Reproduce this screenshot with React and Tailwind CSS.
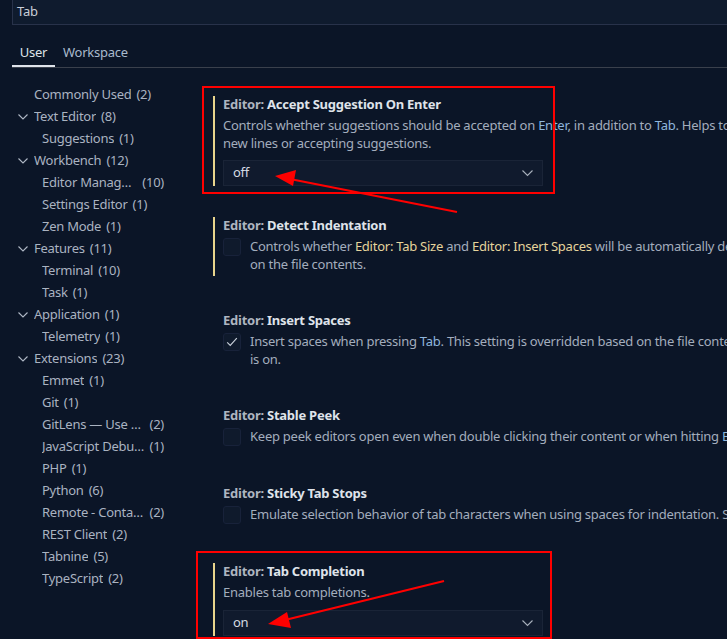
import React from "react";

const Chevron = () => (
  <svg width="10" height="6" viewBox="0 0 10 6" className="shrink-0">
    <polyline points="0.5,0.5 5,5 9.5,0.5" fill="none" stroke="#b0b8c6" strokeWidth="1.1" />
  </svg>
);

const tree = [
  { l: "Commonly Used", c: "(2)", lvl: 0 },
  { l: "Text Editor", c: "(8)", lvl: 0, chev: true },
  { l: "Suggestions", c: "(1)", lvl: 1 },
  { l: "Workbench", c: "(12)", lvl: 0, chev: true },
  { l: "Editor Management", c: "(10)", lvl: 1 },
  { l: "Settings Editor", c: "(1)", lvl: 1 },
  { l: "Zen Mode", c: "(1)", lvl: 1 },
  { l: "Features", c: "(11)", lvl: 0, chev: true },
  { l: "Terminal", c: "(10)", lvl: 1 },
  { l: "Task", c: "(1)", lvl: 1 },
  { l: "Application", c: "(1)", lvl: 0, chev: true },
  { l: "Telemetry", c: "(1)", lvl: 1 },
  { l: "Extensions", c: "(23)", lvl: 0, chev: true },
  { l: "Emmet", c: "(1)", lvl: 1 },
  { l: "Git", c: "(1)", lvl: 1 },
  { l: "GitLens — Use Git Superpowers", c: "(2)", lvl: 1 },
  { l: "JavaScript Debugger", c: "(1)", lvl: 1 },
  { l: "PHP", c: "(1)", lvl: 1 },
  { l: "Python", c: "(6)", lvl: 1 },
  { l: "Remote - Containers", c: "(2)", lvl: 1 },
  { l: "REST Client", c: "(2)", lvl: 1 },
  { l: "Tabnine", c: "(5)", lvl: 1 },
  { l: "TypeScript", c: "(2)", lvl: 1 },
];

const Code = ({ children }) => <span className="text-[#8fb6dd]">{children}</span>;
const Link = ({ children }) => <span className="text-[#e6d49c]">{children}</span>;

const Title = ({ name }) => (
  <div className="h-[16px] leading-[16px] font-bold text-[13px] whitespace-nowrap">
    <span className="text-[#aeb5c0]">Editor: </span>
    <span className="text-[#dfe3ea]">{name}</span>
  </div>
);

const Checkbox = ({ checked }) => (
  <div className="w-[18px] h-[18px] mt-[1px] shrink-0 rounded-[3px] bg-[#0f1a2c] border border-[#18223a] flex items-center justify-center">
    {checked && (
      <svg width="14" height="14" viewBox="0 0 16 16">
        <polyline points="2.5,8.5 6,12 13.5,3.5" fill="none" stroke="#c9d0da" strokeWidth="1.3" />
      </svg>
    )}
  </div>
);

const Dropdown = ({ value, mt }) => (
  <div className={`${mt} w-[320px] h-[26px] bg-[#101a2d] border border-[#1a2437] flex items-center justify-between pl-[9px] pr-[9px] text-[13px] text-[#d5dae2]`}>
    <span>{value}</span>
    <svg width="11" height="7" viewBox="0 0 11 7">
      <polyline points="0.5,0.5 5.5,5.5 10.5,0.5" fill="none" stroke="#a8b0bc" strokeWidth="1.1" />
    </svg>
  </div>
);

export default function App() {
  return (
    <div
      className="relative w-[727px] h-[639px] overflow-hidden bg-[#0b1527] text-[13px] tracking-[-0.25px]"
      style={{ fontFamily: '"Noto Sans", "Open Sans", sans-serif' }}
    >
      {/* search */}
      <div className="ml-[12px] h-[25px] bg-[#0f1b2e] border-l border-b border-[#28324a] flex items-center pl-[4px] text-[#c8ced8] text-[13px]">
        Tab
      </div>

      {/* tabs */}
      <div className="ml-[12px] mt-[17px] h-[26px] border-b border-[#3a404c] flex items-start text-[13px]">
        <div className="h-[25px] w-[43px] border-b-2 border-[#dfe3ea] flex justify-center pt-[1px] text-[#dfe3ea] leading-[18px]">
          User
        </div>
        <div className="ml-[8px] pt-[1px] leading-[18px] text-[#a9bacd]">Workspace</div>
      </div>

      <div className="flex">
        {/* sidebar */}
        <div className="w-[200px] shrink-0 pt-[16px]">
          {tree.map((t, i) => (
            <div key={i} className="h-[22px] flex items-center text-[#aab3c1] whitespace-nowrap">
              <div className="w-[34px] shrink-0 flex justify-end pr-[6px]">{t.chev && <Chevron />}</div>
              <div className={t.lvl ? "flex min-w-0 ml-[8px] max-w-[122px]" : "flex min-w-0 max-w-[130px]"}>
                <span className="truncate min-w-0">{t.l}</span>
                <span className="shrink-0 ml-[5px]">{t.c}</span>
              </div>
            </div>
          ))}
        </div>

        {/* content */}
        <div className="flex-1 min-w-0 pt-[28px] text-[13px] whitespace-nowrap">
          {/* 1 */}
          <div className="ml-[13px] border-l-2 border-[#e8d48c] pl-[8px]">
            <Title name="Accept Suggestion On Enter" />
            <div className="mt-[4px] leading-[18px] text-[#a3adbd]">
              Controls whether suggestions should be accepted on <Code>Enter</Code>, in addition to <Code>Tab</Code>. Helps to avoid ambiguity between inserting
              <br />
              new lines or accepting suggestions.
            </div>
            <Dropdown value="off" mt="mt-[8px]" />
          </div>

          {/* 2 */}
          <div className="mt-[31px] ml-[13px] border-l-2 border-[#e8d48c] pl-[8px] pb-[3px]">
            <Title name="Detect Indentation" />
            <div className="mt-[4px] flex gap-[9px]">
              <Checkbox />
              <div className="leading-[18px] text-[#a3adbd]">
                Controls whether <Link>Editor: Tab Size</Link> and <Link>Editor: Insert Spaces</Link> will be automatically detected when a file is opened based
                <br />
                on the file contents.
              </div>
            </div>
          </div>

          {/* 3 */}
          <div className="mt-[36px] ml-[13px] border-l-2 border-transparent pl-[8px] pb-[3px]">
            <Title name="Insert Spaces" />
            <div className="mt-[4px] flex gap-[9px]">
              <Checkbox checked />
              <div className="leading-[18px] text-[#a3adbd]">
                Insert spaces when pressing <Code>Tab</Code>. This setting is overridden based on the file contents when <Link>Editor: Detect Indentation</Link>
                <br />
                is on.
              </div>
            </div>
          </div>

          {/* 4 */}
          <div className="mt-[36px] ml-[13px] border-l-2 border-transparent pl-[8px] pb-[3px]">
            <Title name="Stable Peek" />
            <div className="mt-[4px] flex gap-[9px]">
              <Checkbox />
              <div className="leading-[18px] text-[#a3adbd]">
                Keep peek editors open even when double clicking their content or when hitting <Code>Escape</Code>.
              </div>
            </div>
          </div>

          {/* 5 */}
          <div className="mt-[36px] ml-[13px] border-l-2 border-transparent pl-[8px] pb-[3px]">
            <Title name="Sticky Tab Stops" />
            <div className="mt-[4px] flex gap-[9px]">
              <Checkbox />
              <div className="leading-[18px] text-[#a3adbd]">
                Emulate selection behavior of tab characters when using spaces for indentation. Selection will stick to tab stops.
              </div>
            </div>
          </div>

          {/* 6 */}
          <div className="mt-[36px] ml-[13px] border-l-2 border-[#e8d48c] pl-[8px]">
            <Title name="Tab Completion" />
            <div className="mt-[4px] leading-[18px] text-[#a3adbd]">Enables tab completions.</div>
            <Dropdown value="on" mt="mt-[9px]" />
          </div>
        </div>
      </div>

      {/* annotations */}
      <div className="absolute left-[202px] top-[86px] w-[353px] h-[108px] border-2 border-[#ff0000] pointer-events-none" />
      <div className="absolute left-[196px] top-[551px] w-[356px] h-[88px] border-2 border-[#ff0000] pointer-events-none" />
      <svg className="absolute left-0 top-0 pointer-events-none" width="727" height="639">
        <line x1="457" y1="212" x2="290" y2="179" stroke="#ff0000" strokeWidth="2.2" />
        <polygon points="275,176 296,170 293,186" fill="#ff0000" />
        <line x1="444" y1="581" x2="285" y2="620" stroke="#ff0000" strokeWidth="2.2" />
        <polygon points="268,624 287,612 291,628" fill="#ff0000" />
      </svg>
    </div>
  );
}
